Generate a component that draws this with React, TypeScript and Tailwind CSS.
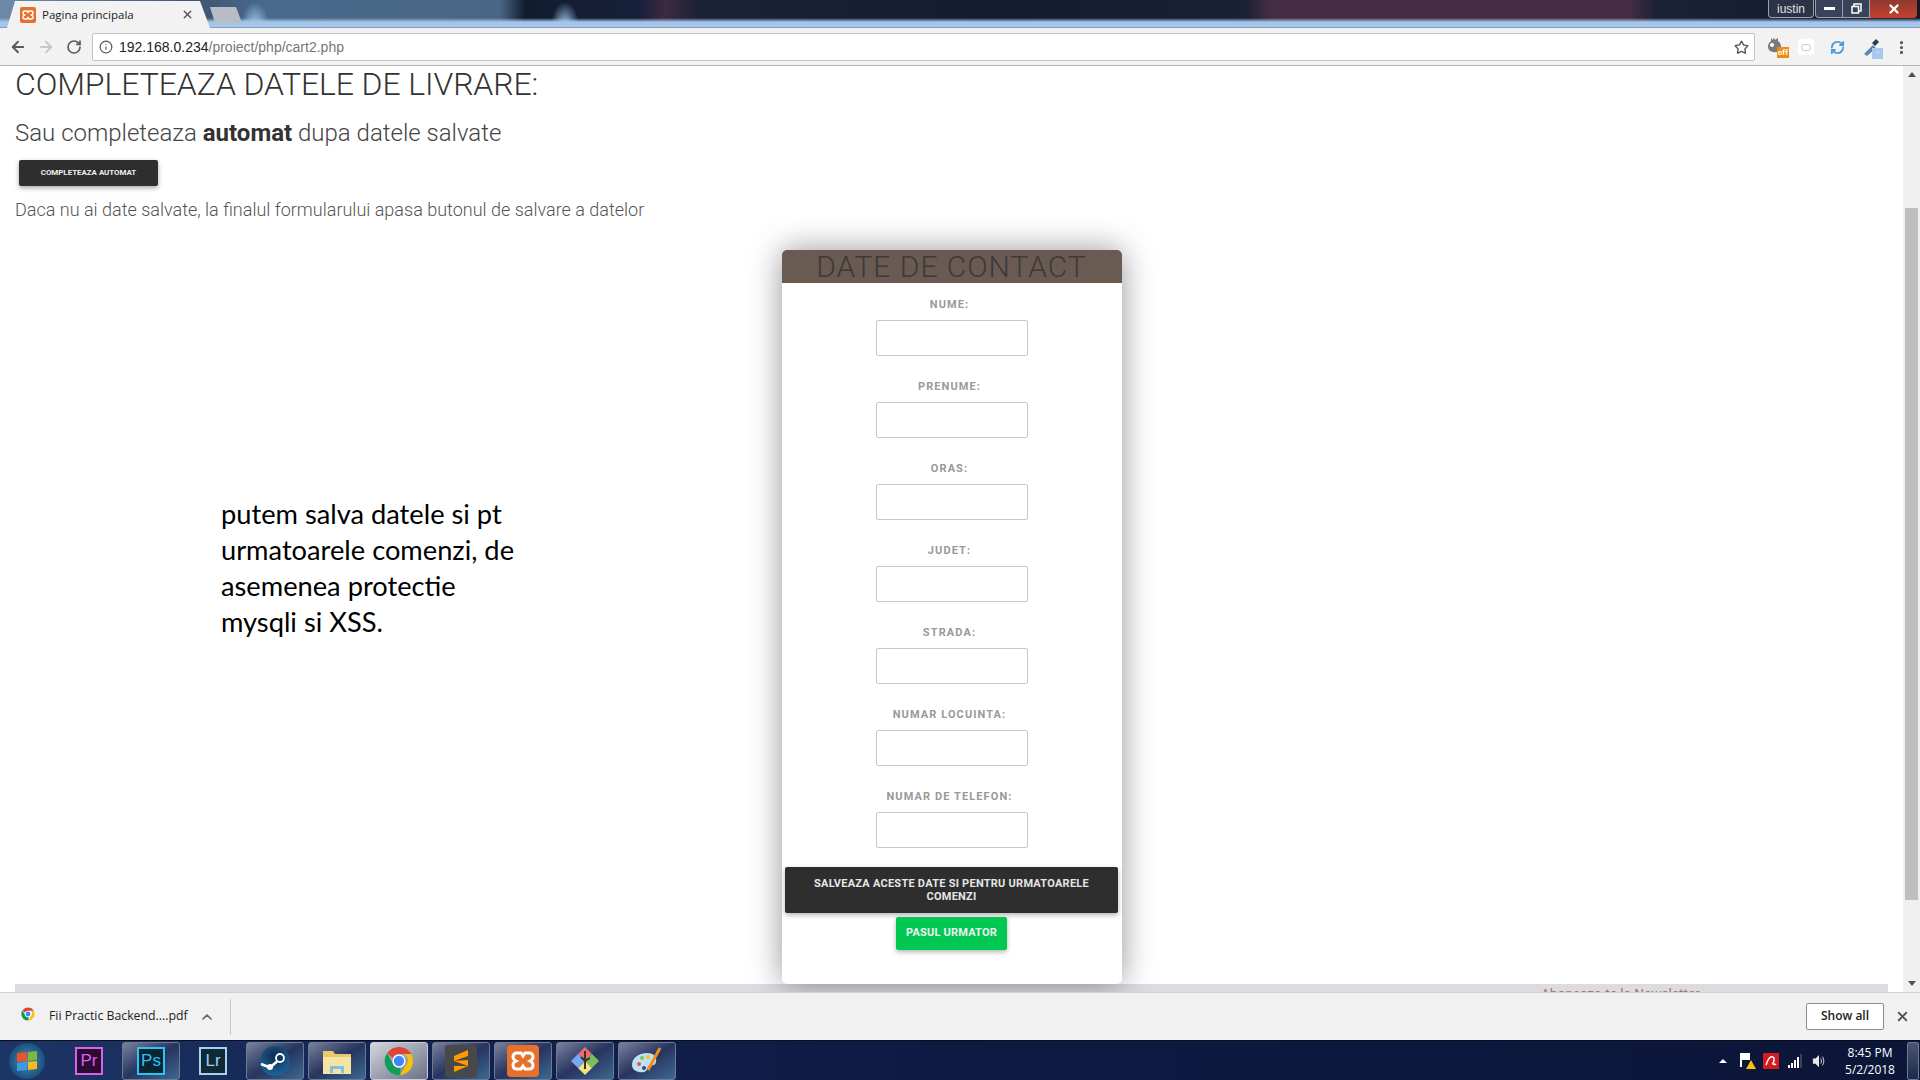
import { ArrowLeft, ArrowRight, ChevronUp, Info, MoreVertical, RefreshCw, RotateCw, Star, X } from "lucide-react";

const fields = ["NUME:", "PRENUME:", "ORAS:", "JUDET:", "STRADA:", "NUMAR LOCUINTA:", "NUMAR DE TELEFON:"];

function XamppIcon({ size }: { size: number }) {
  return (
    <svg width={size} height={size} viewBox="0 0 32 32">
      <rect width="32" height="32" rx="4" fill="#e8702a" />
      <path
        d="M10 8h4l2 3 2-3h4c3 0 4 2 4 4s-1 3-3 4c2 1 3 2 3 4s-1 4-4 4h-4l-2-3-2 3h-4c-3 0-4-2-4-4s1-3 3-4c-2-1-3-2-3-4s1-4 4-4z"
        fill="none"
        stroke="#fff"
        strokeWidth="3"
      />
    </svg>
  );
}

function ChromeIcon({ size }: { size: number }) {
  return (
    <svg width={size} height={size} viewBox="0 0 32 32">
      <path d="M16 1a15 15 0 0 1 13 7.500H16a7.500 7.500 0 0 0-7 4.500L3.500 7.500A15 15 0 0 1 16 1z" fill="#db4437" />
      <path d="M29 8.500A15 15 0 0 1 17 31l6.500-11A7.500 7.500 0 0 0 22 8.500z" fill="#f4c20d" />
      <path d="M3.500 7.500L9.500 19a7.500 7.500 0 0 0 8 4.500L17 31A15 15 0 0 1 3.500 7.500z" fill="#0f9d58" />
      <circle cx="16" cy="16" r="7" fill="#fff" />
      <circle cx="16" cy="16" r="5.500" fill="#4285f4" />
    </svg>
  );
}

function AdobeTile({ label, color, bg }: { label: string; color: string; bg: string }) {
  return (
    <div
      className="flex h-[28px] w-[28px] items-center justify-center border-2 text-[17px] font-['Liberation_Sans',sans-serif] leading-none"
      style={{ borderColor: color, color, backgroundColor: bg }}
    >
      {label}
    </div>
  );
}

function TaskButton({ active, children, hot }: { active?: boolean; hot?: boolean; children: React.ReactNode }) {
  return (
    <div
      className={
        hot
          ? "flex h-[38px] w-[58px] items-center justify-center rounded-[3px] border border-[#c8ccd8] bg-gradient-to-br from-[#d4d6dc] to-[#6d7186]"
          : active
            ? "flex h-[38px] w-[58px] items-center justify-center rounded-[3px] border border-[#6d7a96] bg-gradient-to-br from-[#7c829c] via-[#27345f] to-[#3c6a92]"
            : "flex h-[38px] w-[58px] items-center justify-center"
      }
    >
      {children}
    </div>
  );
}

function ContactCard() {
  return (
    <section className="relative z-10 mx-auto mt-[28px] h-[734px] w-[340px] rounded-[5px] bg-white shadow-[0_0_32px_rgba(0,0,0,0.42)]">
      <h2 className="h-[33px] overflow-hidden rounded-t-[5px] bg-[#695a52] text-center text-[30px] leading-[34px] font-light tracking-[1px] text-[#3c3a39]">
        DATE DE CONTACT
      </h2>
      <div className="flex flex-col items-center pt-[13px]">
        {fields.map((field) => (
          <div key={field} className="mb-[11px] flex h-[71px] flex-col items-center">
            <label className="mb-[6px] h-[18px] pr-[4px] text-[11px] leading-[18px] font-bold tracking-[1.1px] text-[#999999]">
              {field}
            </label>
            <input
              type="text"
              className="h-[36px] w-[152px] rounded-[2px] border border-[#c8c8c8] bg-white"
            />
          </div>
        ))}
        <button
          type="button"
          className="mt-[-3px] h-[46px] w-[333px] rounded-[2px] bg-[#2e2e2e] px-[16px] text-[11px] leading-[13px] font-bold tracking-[0.25px] text-[#e6e6e6] shadow-[0_2px_5px_rgba(0,0,0,0.3)]"
        >
          SALVEAZA ACESTE DATE SI PENTRU URMATOARELE COMENZI
        </button>
        <button
          type="button"
          className="mt-[4px] h-[33px] w-[111px] rounded-[2px] bg-[#00c853] text-[11px] font-bold tracking-[0.2px] text-[#f0f0f0] shadow-[0_2px_5px_rgba(0,0,0,0.3)]"
        >
          PASUL URMATOR
        </button>
      </div>
    </section>
  );
}

export default function App() {
  return (
    <div className="flex h-[1080px] w-[1920px] flex-col overflow-hidden bg-white font-['Roboto',sans-serif]">
      {/* window chrome */}
      <div className="relative flex h-[28px] shrink-0 items-end bg-[radial-gradient(ellipse_14px_24px_at_255px_26px,#9ccbf0,transparent),radial-gradient(ellipse_14px_24px_at_565px_26px,#9ccbf0,transparent),linear-gradient(90deg,#6f8aa8_0px,#3f5673_200px,#4a6a8c_268px,#4a6684_500px,#121c30_525px,#17203a_640px,#3c2a42_665px,#1b2236_700px,#141c30_1000px,#1a2035_1245px,#452c42_1270px,#452c42_1630px,#1b2236_1655px,#10182a_1920px)]">
        <div className="absolute inset-x-0 bottom-0 h-[10px] bg-gradient-to-b from-transparent via-[#a5c5e9] via-[45%] to-[#a5c5e9] border-b border-[#7f9cc2]" />
        <div className="relative ml-[7px] flex h-[27px] w-[203px] items-center bg-[#f2f2f2] pl-[13px] pr-[16px] [clip-path:polygon(0_100%,8px_0,193px_0,203px_100%)]">
          <XamppIcon size={16} />
          <span className="ml-[6px] flex-1 font-['Open_Sans',sans-serif] text-[11.5px] text-[#222222]">Pagina principala</span>
          <X size={13} strokeWidth={2.5} className="text-[#555555]" />
        </div>
        <div className="relative mb-[5px] ml-0 h-[16px] w-[32px] bg-[#b7bcc5] [clip-path:polygon(0_0,26px_0,32px_100%,5px_100%)]" />
        <div className="absolute right-[3px] top-0 flex h-[18px] items-stretch font-['Liberation_Sans',sans-serif]">
          <div className="mr-[1px] flex w-[46px] items-center justify-center rounded-b-[4px] border border-t-0 border-[#9aa2b0] bg-[#2c3346] text-[12px] text-[#e0e0e0]">iustin</div>
          <div className="flex w-[28px] items-center justify-center rounded-bl-[4px] border border-t-0 border-[#9aa2b0] bg-[#394258]">
            <div className="h-[3px] w-[11px] bg-white" />
          </div>
          <div className="flex w-[27px] items-center justify-center border-b border-r border-[#9aa2b0] bg-[#394258]">
            <svg width="11" height="11" viewBox="0 0 11 11">
              <path d="M3 3V1h7v7H8" stroke="#fff" strokeWidth="1.500" fill="none" />
              <rect x="1" y="3.500" width="6.500" height="6.500" stroke="#fff" strokeWidth="1.500" fill="none" />
            </svg>
          </div>
          <div className="flex w-[47px] items-center justify-center rounded-br-[4px] bg-gradient-to-b from-[#8f3a30] to-[#c4412f]">
            <X size={14} strokeWidth={4} className="text-white" />
          </div>
        </div>
      </div>

      <div className="flex h-[38px] shrink-0 items-center border-b border-[#b4b4b4] bg-[#f2f2f2] pl-[9px] pt-[1px]">
        <ArrowLeft size={18} strokeWidth={2.5} className="text-[#5a5a5a]" />
        <ArrowRight size={18} strokeWidth={2.5} className="ml-[10px] text-[#c8c8c8]" />
        <RotateCw size={16} strokeWidth={2.5} className="ml-[11px] text-[#5a5a5a]" />
        <div className="ml-[10px] flex h-[28px] w-[1663px] items-center rounded-[2px] border border-[#c4c4c4] bg-white pl-[6px] pr-[5px]">
          <Info size={14} strokeWidth={2} className="text-[#555555]" />
          <span className="ml-[6px] flex-1 font-['Liberation_Sans',sans-serif] text-[14px] text-[#222222]">
            192.168.0.234<span className="text-[#777777]">/proiect/php/cart2.php</span>
          </span>
          <Star size={15} strokeWidth={2.2} className="text-[#555555]" />
        </div>
        <div className="ml-[12px] flex items-center">
          <div className="relative h-[20px] w-[20px]">
            <svg width="15" height="16" viewBox="0 0 15 16" className="absolute left-0 top-0">
              <path d="M7 0l1 3 3-2 0 3c3 2 4 6 2 9-2 3-8 3-11 0-2-3-1-7 2-9l0-3 2 2z" fill="#7a7a7a" />
              <circle cx="5" cy="8" r="2" fill="#fff" />
            </svg>
            <div className="absolute bottom-[-1px] right-[-2px] bg-[#f08a12] px-[1px] text-[8px] leading-[11px] font-bold text-white">off</div>
          </div>
          <div className="ml-[11px] flex h-[16px] w-[16px] items-center justify-center rounded-[3px] bg-white">
            <div className="h-[7px] w-[10px] rounded-full border border-[#c4c4c4]" />
          </div>
          <RefreshCw size={15} strokeWidth={3} className="ml-[16px] text-[#4f9bd9]" />
          <div className="relative ml-[16px] h-[20px] w-[20px]">
            <svg width="20" height="20" viewBox="0 0 20 20">
              <path d="M3 17l9-9 3 3-9 8z" fill="#5a84c0" />
              <path d="M11 6l4-4 3 3-4 4z" fill="#333a44" />
            </svg>
            <div className="absolute bottom-[-2px] right-[-2px] h-[11px] w-[11px] bg-[#a8c8f0] text-center text-[8px] leading-[10px] text-white">-</div>
          </div>
          <MoreVertical size={17} strokeWidth={2.5} className="ml-[12px] text-[#555555]" />
        </div>
      </div>

      {/* page */}
      <div className="relative flex h-[926px] shrink-0 overflow-hidden">
        <main className="relative w-[1903px] overflow-hidden">
          <div className="pl-[15px] font-light text-[#444444]">
            <h1 className="text-[32px] leading-[37px] font-light tracking-[-0.1px] text-[#333333]">COMPLETEAZA DATELE DE LIVRARE:</h1>
            <p className="mt-[15px] text-[24px] leading-[30px]">
              Sau completeaza <b className="font-bold text-[#333333]">automat</b> dupa datele salvate
            </p>
            <button
              type="button"
              className="ml-[4px] mt-[12px] block h-[26px] w-[139px] rounded-[2px] bg-[#2e2e2e] text-[7.900px] font-bold text-[#f0f0f0] shadow-[0_2px_5px_rgba(0,0,0,0.35)]"
            >
              COMPLETEAZA AUTOMAT
            </button>
            <p className="mt-[12px] text-[18px] leading-[24px] text-[#555555]">
              Daca nu ai date salvate, la finalul formularului apasa butonul de salvare a datelor
            </p>
          </div>
          <ContactCard />
          <div className="mx-[15px] h-[8px] overflow-hidden bg-[#dddbe0]">
            <span className="relative left-[1526px] top-[2px] block w-fit text-[13.600px] leading-[14px] text-[#9a7a70]">Aboneaza-te la Newsletter</span>
          </div>
          <p className="absolute left-[221px] top-[430px] w-[300px] font-['Lato',sans-serif] text-[27.250px] leading-[36px] text-black">
            putem salva datele si pt urmatoarele comenzi, de asemenea protectie mysqli si XSS.
          </p>
        </main>
        <aside className="flex w-[17px] flex-col bg-[#f0f0f0]">
          <div className="flex h-[17px] items-center justify-center">
            <div className="h-0 w-0 border-x-[4px] border-b-[5px] border-x-transparent border-b-[#505050]" />
          </div>
          <div className="mx-[2px] mt-[125px] h-[692px] bg-[#bebebe]" />
          <div className="mt-auto flex h-[17px] items-center justify-center">
            <div className="h-0 w-0 border-x-[4px] border-t-[5px] border-x-transparent border-t-[#505050]" />
          </div>
        </aside>
      </div>

      {/* download bar */}
      <div className="flex h-[48px] shrink-0 items-center border-t border-[#d0d0d0] bg-[#f1f1f1]">
        <div className="ml-[21px] mb-[5px]"><ChromeIcon size={14} /></div>
        <span className="ml-[14px] font-['Open_Sans',sans-serif] text-[12.300px] text-[#222222]">Fii Practic Backend....pdf</span>
        <ChevronUp size={16} strokeWidth={2.5} className="ml-[11px] text-[#666666]" />
        <div className="ml-[15px] h-[36px] w-px bg-[#c8c8c8]" />
        <button
          type="button"
          className="mb-[1px] ml-auto flex h-[27px] w-[78px] items-center justify-center rounded-[2px] border border-[#8c8c8c] bg-white font-['Open_Sans',sans-serif] text-[12px] font-semibold text-[#222222]"
        >
          Show all
        </button>
        <X size={15} strokeWidth={3} className="ml-[11px] mr-[10px] text-[#555555]" />
      </div>

      {/* taskbar */}
      <div className="flex h-[40px] shrink-0 items-center border-t border-[#0a0f20] bg-[linear-gradient(90deg,#1d3565_0%,#11204e_25%,#0d1a42_50%,#0b1638_100%)]">
        <div className="ml-[9px] mr-[15px] flex h-[36px] w-[36px] items-center justify-center rounded-full bg-[radial-gradient(circle,#4b8fc0_0%,#1a4f7c_70%,#0f2d4e_100%)]">
          <div className="grid h-[18px] w-[20px] -skew-y-6 grid-cols-2 gap-px">
            <div className="bg-[#e8552b]" />
            <div className="bg-[#7cb93c]" />
            <div className="bg-[#3f9be0]" />
            <div className="bg-[#f6b91e]" />
          </div>
        </div>
        <div className="flex items-center gap-[4px]">
          <TaskButton><AdobeTile label="Pr" color="#d862e8" bg="#2b0a33" /></TaskButton>
          <TaskButton active><AdobeTile label="Ps" color="#2ac4f5" bg="#0a2433" /></TaskButton>
          <TaskButton><AdobeTile label="Lr" color="#a8d0e6" bg="#0e2a38" /></TaskButton>
          <TaskButton active>
            <svg width="30" height="30" viewBox="0 0 30 30">
              <defs>
                <radialGradient id="steamBg" cx="50%" cy="35%" r="70%">
                  <stop offset="0%" stopColor="#0f2a4c" />
                  <stop offset="100%" stopColor="#1c6aa0" />
                </radialGradient>
              </defs>
              <circle cx="15" cy="15" r="15" fill="url(#steamBg)" />
              <circle cx="20" cy="12" r="4" fill="none" stroke="#fff" strokeWidth="1.800" />
              <path d="M1 18l9 3.500 7-6" stroke="#fff" strokeWidth="2.500" fill="none" />
              <circle cx="10" cy="21" r="3" fill="#fff" />
            </svg>
          </TaskButton>
          <TaskButton active>
            <svg width="32" height="30" viewBox="0 0 32 30">
              <path d="M2 5h10l2 3h16v20H2z" fill="#e9c96a" />
              <path d="M2 11h28v17H2z" fill="#f6e4a4" />
              <path d="M9 27v-7h14v7h-3v-4h-8v4z" fill="#7ec2e8" />
            </svg>
          </TaskButton>
          <TaskButton hot><ChromeIcon size={30} /></TaskButton>
          <TaskButton active>
            <div className="flex h-[32px] w-[32px] items-center justify-center rounded-[3px] bg-[#484848]">
              <svg width="16" height="24" viewBox="0 0 16 24">
                <path d="M15 1v6L1 12V7zM1 12l14 5v-6zM15 17L1 23v-6z" fill="#ff9a00" />
              </svg>
            </div>
          </TaskButton>
          <TaskButton active><XamppIcon size={32} /></TaskButton>
          <TaskButton active>
            <svg width="32" height="32" viewBox="0 0 32 32">
              <path d="M16 2l7 7-7 7-7-7z" fill="#ef6a6a" />
              <path d="M23 9l7 7-7 7-7-7z" fill="#7cc05a" />
              <path d="M16 16l7 7-7 7-7-7z" fill="#f4e27a" />
              <path d="M9 9l7 7-7 7-7-7z" fill="#78a8f4" />
              <path d="M16 6v18M12 12l4 4 5-3" stroke="#333333" strokeWidth="2" fill="none" />
            </svg>
          </TaskButton>
          <TaskButton active>
            <svg width="34" height="32" viewBox="0 0 34 32">
              <path d="M2 20c0-8 8-12 15-12 7 0 10 4 9 9-1 4-4 3-7 4-2 1-1 5-5 6-5 1-12-1-12-7z" fill="#bfe0f2" />
              <circle cx="9" cy="19" r="2" fill="#e0574a" />
              <circle cx="12" cy="13" r="2" fill="#8cc04a" />
              <circle cx="18" cy="12" r="2" fill="#f2c230" />
              <circle cx="14" cy="23" r="2" fill="#2c4a7a" />
              <path d="M18 25L30 3" stroke="#f08c1e" strokeWidth="3" />
            </svg>
          </TaskButton>
        </div>
        <div className="ml-auto flex items-center text-white">
          <div className="h-0 w-0 border-x-[4px] border-b-[4px] border-x-transparent border-b-white" />
          <div className="relative ml-[13px] h-[16px] w-[14px]">
            <div className="absolute left-0 top-0 h-[14px] w-[2px] bg-white" />
            <div className="absolute left-[2px] top-0 h-[7px] w-[8px] bg-white" />
            <div className="absolute bottom-0 right-[-2px] h-0 w-0 border-x-[5px] border-b-[9px] border-x-transparent border-b-[#f4c20d]" />
          </div>
          <div className="ml-[9px] flex h-[16px] w-[16px] items-center justify-center bg-[#d81920]">
            <svg width="12" height="12" viewBox="0 0 12 12">
              <path d="M1 10C3 3 6 1 8 2c2 1 1 5 0 6s2 2 3 1" stroke="#fff" strokeWidth="1.500" fill="none" />
            </svg>
          </div>
          <div className="ml-[9px] flex h-[14px] items-end gap-px">
            <div className="h-[3px] w-[2px] bg-white" />
            <div className="h-[5px] w-[2px] bg-white" />
            <div className="h-[8px] w-[2px] bg-white" />
            <div className="h-[11px] w-[2px] bg-white" />
            <div className="h-[14px] w-[2px] bg-[#3a4258]" />
          </div>
          <svg width="14" height="16" viewBox="0 0 16 16" className="ml-[10px]">
            <path d="M1 5h3l4-4v14l-4-4H1z" fill="#e8e8e8" />
            <path d="M10 5c1 2 1 4 0 6M12 3c2 3 2 7 0 10" stroke="#e8e8e8" strokeWidth="1" fill="none" />
          </svg>
          <div className="ml-[14px] w-[60px] text-center font-['Open_Sans',sans-serif] text-[12px] leading-[17px]">
            <div>8:45 PM</div>
            <div>5/2/2018</div>
          </div>
          <div className="ml-[7px] mr-[1px] h-[38px] w-[12px] rounded-[2px] border border-[#6d7a96] bg-gradient-to-b from-[#4a5570] to-[#1c2a4a]" />
        </div>
      </div>
    </div>
  );
}
